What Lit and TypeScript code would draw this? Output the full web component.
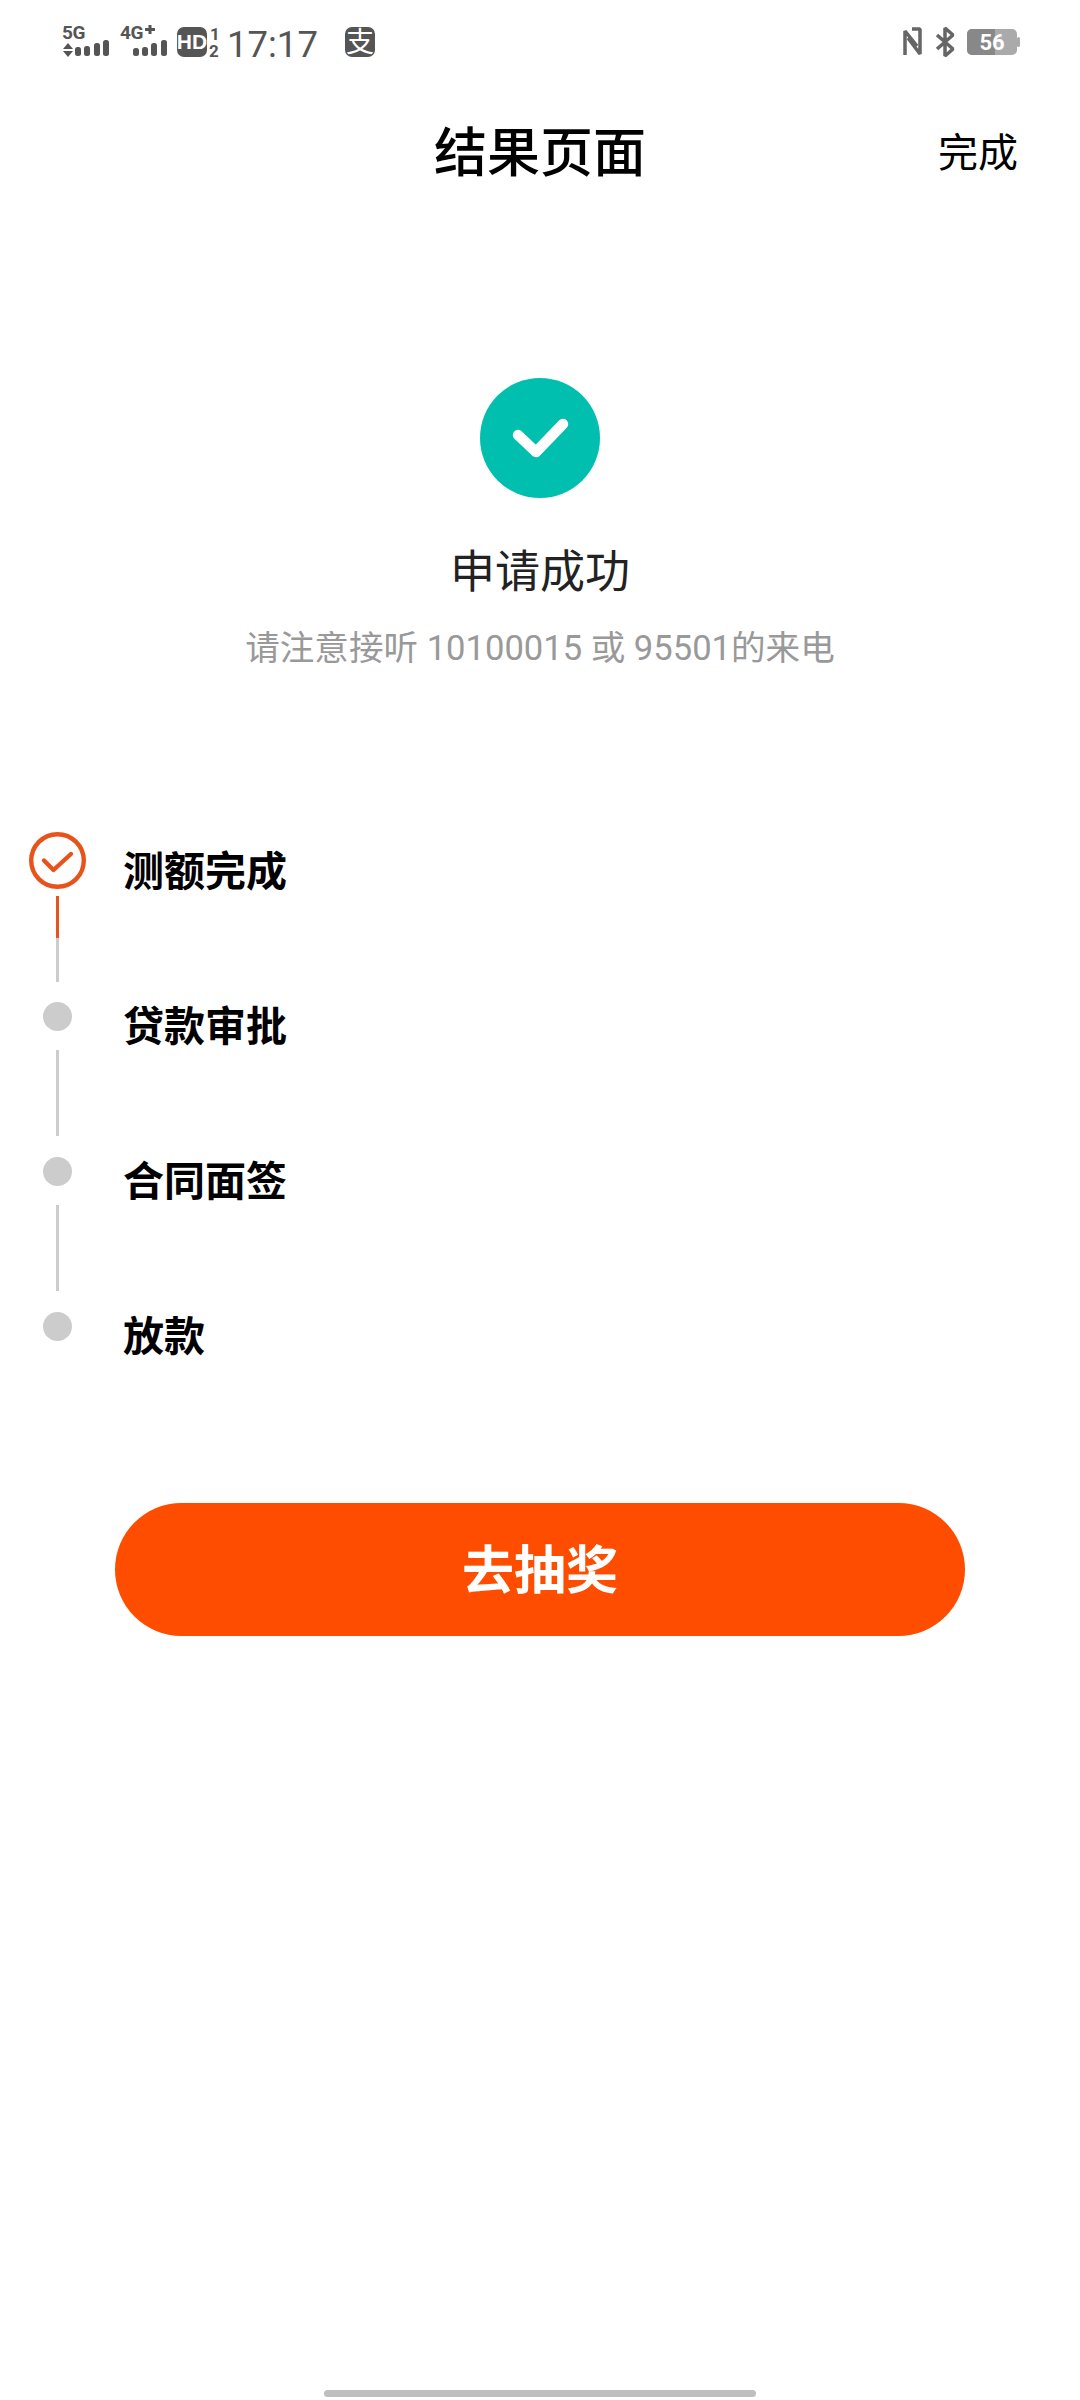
import { LitElement, html, css } from "lit";
import { customElement } from "lit/decorators.js";

@customElement("app-root")
export class AppRoot extends LitElement {
  static styles = css`
    :host { display: block; width: 1080px; height: 2400px; background: #fff; font-family: Roboto, "Noto Sans CJK SC", sans-serif; position: relative; overflow: hidden; }
    .status { height: 80px; display: flex; justify-content: space-between; }
    .status svg { display: block; }
    .nav { height: 138px; display: grid; grid-template-columns: 1fr auto 1fr; align-items: center; }
    .title { font-size: 53px; font-weight: 500; color: #000; grid-column: 2; }
    .done { font-size: 40px; color: #000; justify-self: end; padding: 2px 62px 0 0; }
    .result { display: flex; flex-direction: column; align-items: center; padding-top: 160px; }
    .ok { width: 120px; height: 120px; display: block; }
    .h { font-size: 45px; color: #222; margin-top: 43px; line-height: 64px; }
    .sub { font-size: 34.600px; color: #999; margin-top: 18px; line-height: 50px; white-space: nowrap; }
    .steps { margin-top: 159px; padding-left: 29px; display: flex; flex-direction: column; }
    .step { display: flex; height: 155px; }
    .rail { width: 57px; display: flex; flex-direction: column; align-items: center; }
    .label { margin-left: 37px; padding-top: 12px; font-size: 41px; font-weight: 700; color: #000; line-height: 56px; }
    .mark { display: block; flex: none; }
    .dot { width: 29px; height: 29px; border-radius: 50%; background: #ccc; margin-top: 15px; flex: none; }
    .line { width: 3px; height: 86px; background: #ccc; margin-top: 19px; flex: none; }
    .line.first { margin-top: 7px; background: linear-gradient(#e8531c 0 42px, #ccc 42px); }
    .btn { margin: 51px 0 0 115px; width: 850px; height: 133px; box-sizing: border-box; padding-bottom: 7px; border-radius: 67px; background: #ff4d00; color: #fff; font-size: 52px; font-weight: 700; display: flex; align-items: center; justify-content: center; }
    .home { position: absolute; left: 324px; top: 2390px; width: 432px; height: 7px; border-radius: 4px; background: #bfbfbf; }
  `;

  render() {
    return html`
      <div class="status">
        <svg width="400" height="80" viewBox="0 0 400 80">
          <g fill="#555" font-family="Roboto, sans-serif" font-weight="700">
            <text x="62" y="39" font-size="19" letter-spacing="-0.5">5G</text>
            <path d="M63 49l5-6 5 6zM63 51l5 6 5-6z" />
            <rect x="75" y="47" width="6" height="9" rx="2.5" />
            <rect x="84" y="46" width="6" height="10" rx="2.5" />
            <rect x="94" y="43" width="6" height="13" rx="2.5" />
            <rect x="103" y="40" width="6" height="16" rx="2.5" />
            <text x="120" y="39" font-size="19" letter-spacing="-0.5">4G</text>
            <path d="M145 28h10v3h-10zM148.500 25h3v9h-3z" />
            <rect x="133" y="48" width="6" height="8" rx="2.5" />
            <rect x="142" y="47" width="6" height="9" rx="2.5" />
            <rect x="151" y="43" width="6" height="13" rx="2.5" />
            <rect x="161" y="40" width="6" height="16" rx="2.5" />
            <rect x="177" y="27" width="30" height="30" rx="7" />
            <text x="192" y="49" font-size="21" fill="#fff" text-anchor="middle" font-family="'Liberation Sans', sans-serif">HD</text>
            <text x="215" y="40" font-size="17" text-anchor="middle">1</text>
            <text x="214" y="57" font-size="17" text-anchor="middle">2</text>
          </g>
          <text x="227" y="57" font-size="36.500" fill="#555" font-family="Roboto, sans-serif">17:17</text>
          <rect x="345" y="27" width="30" height="30" rx="7" fill="#555" />
          <text x="360" y="52" font-size="28" fill="#fff" text-anchor="middle" font-family="'Noto Sans CJK SC', sans-serif">支</text>
        </svg>
        <svg width="200" height="80" viewBox="880 0 200 80">
          <g fill="none" stroke="#666" stroke-width="3.500" stroke-linejoin="bevel">
            <path d="M905 55V31l12 15" />
            <path d="M912 29h8v25l-12-16" />
            <path d="M937 35l16 14-8 7V28l8 7-16 14" />
          </g>
          <rect x="967" y="29" width="50" height="26" rx="5" fill="#aaa" />
          <path d="M972 29h23v26h-23a5 5 0 0 1-5-5V34a5 5 0 0 1 5-5z" fill="#888" />
          <rect x="1017" y="37" width="3" height="10" rx="1.500" fill="#aaa" />
          <text x="992" y="50" font-size="22" font-weight="700" fill="#fff" text-anchor="middle" font-family="Roboto, sans-serif">56</text>
        </svg>
      </div>
      <div class="nav">
        <div class="title">结果页面</div>
        <div class="done">完成</div>
      </div>
      <div class="result">
        <svg class="ok" viewBox="0 0 120 120">
          <circle cx="60" cy="60" r="60" fill="#00bfae" />
          <path d="M38 57l18 17 27-28" fill="none" stroke="#fff" stroke-width="10.500" stroke-linecap="round" stroke-linejoin="round" />
        </svg>
        <div class="h">申请成功</div>
        <div class="sub">请注意接听 10100015 或 95501的来电</div>
      </div>
      <div class="steps">
        <div class="step">
          <div class="rail">
            <svg class="mark" width="57" height="57" viewBox="0 0 57 57">
              <circle cx="28.500" cy="28.500" r="26.300" fill="none" stroke="#e8531c" stroke-width="4.400" />
              <path d="M15 28.500l9.500 9.500L42 22" fill="none" stroke="#e8531c" stroke-width="4.400" stroke-linecap="round" stroke-linejoin="round" />
            </svg>
            <div class="line first"></div>
          </div>
          <div class="label">测额完成</div>
        </div>
        <div class="step"><div class="rail"><div class="dot"></div><div class="line"></div></div><div class="label">贷款审批</div></div>
        <div class="step"><div class="rail"><div class="dot"></div><div class="line"></div></div><div class="label">合同面签</div></div>
        <div class="step"><div class="rail"><div class="dot"></div></div><div class="label">放款</div></div>
      </div>
      <div class="btn">去抽奖</div>
      <div class="home"></div>
    `;
  }
}
